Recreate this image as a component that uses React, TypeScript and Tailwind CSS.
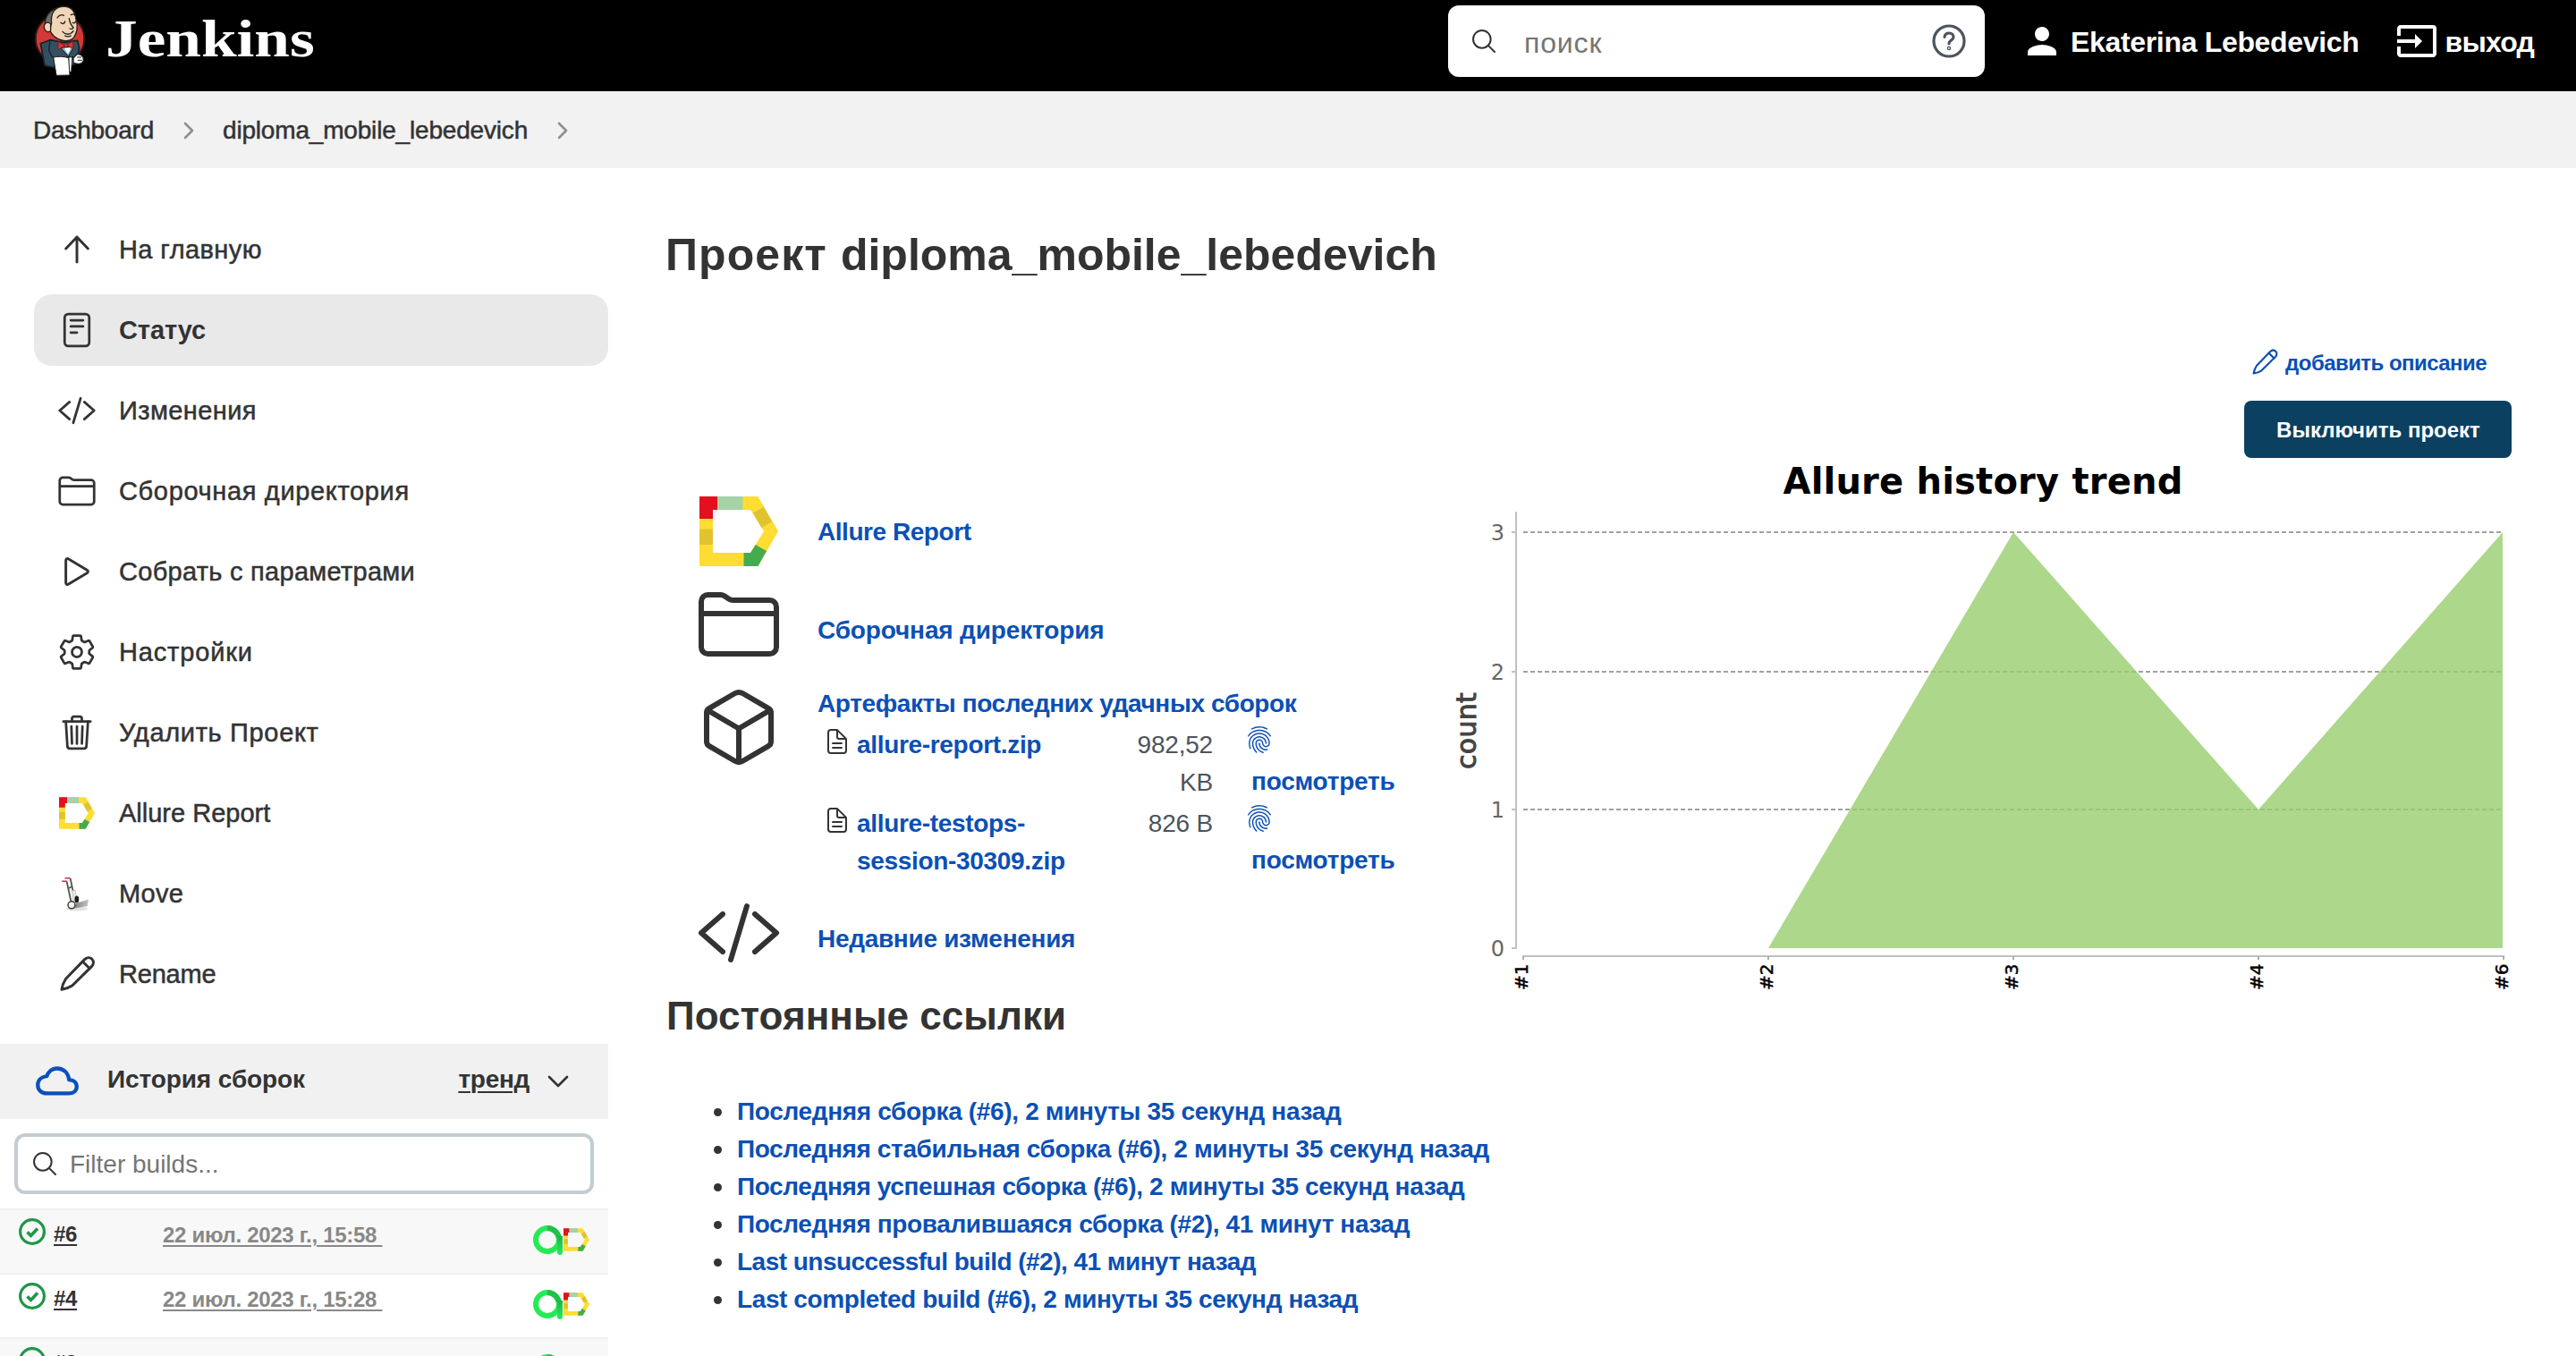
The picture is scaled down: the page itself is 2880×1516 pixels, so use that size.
import type { ReactNode } from "react";
import {
  IoCodeSlashOutline,
  IoCubeOutline,
  IoDocumentTextOutline,
  IoFingerPrintOutline,
  IoFolderOutline,
  IoReaderOutline,
  IoSearchOutline,
  IoSettingsOutline,
  IoTrashOutline,
} from "react-icons/io5";
import { MdInput } from "react-icons/md";

function Butler() {
  return (
    <svg width="64" height="84" viewBox="0 0 64 84" className="shrink-0">
      <g transform="translate(-16 -4) scale(0.33333)" strokeLinejoin="round" strokeLinecap="round">
        <circle cx="141" cy="130" r="82" fill="#d33833" stroke="#2b1b1b" strokeWidth="6" />
        <path d="M76 146 L108 134 L150 142 L200 136 L206 160 L196 212 L178 222 L120 226 L90 220 Z" fill="#335061" stroke="#14202a" strokeWidth="5" />
        <path d="M108 134 L104 170 L116 192 L190 192" fill="none" stroke="#14202a" strokeWidth="4" />
        <path d="M144 160 L188 156 L170 188 Z" fill="#81b0c4" stroke="#14202a" strokeWidth="3" />
        <path d="M156 162 L178 160 L168 182 Z" fill="#ffffff" />
        <path d="M92 100 C86 60 100 30 150 22 L134 80 L112 100 Z" fill="#6d6b6d" stroke="#231f20" strokeWidth="4" />
        <path d="M113 78 C108 40 128 22 154 21 C184 22 194 46 195 66 C202 84 200 112 184 130 C166 142 140 138 122 122 C112 114 108 104 106 100 Z" fill="#f0d6b7" stroke="#231f20" strokeWidth="4" />
        <path d="M110 80 C94 68 84 84 90 98 C94 108 106 110 110 102 Z" fill="#f0d6b7" stroke="#231f20" strokeWidth="4" />
        <path d="M132 60 C138 50 148 48 154 52 M178 50 C184 46 190 48 192 52 M144 76 C150 82 156 80 158 72 M184 76 C188 80 192 76 194 72 M172 62 C174 78 182 88 186 92 C184 98 178 98 174 96 M150 106 C160 118 176 118 186 104 M158 120 C166 124 174 122 178 120" fill="none" stroke="#231f20" strokeWidth="4" />
        <path d="M158 152 L136 140 L134 166 Z M164 152 L184 138 L186 162 Z" fill="#d33833" stroke="#8a1a1a" strokeWidth="3" />
        <circle cx="161" cy="152" r="6" fill="#d33833" stroke="#8a1a1a" strokeWidth="3" />
        <path d="M172 194 L180 192 L178 240 L172 240 Z" fill="#ffffff" />
        <path d="M120 192 C136 188 156 190 170 194 L174 252 L130 253 Z" fill="#ffffff" stroke="#231f20" strokeWidth="3" />
        <path d="M186 194 L198 182 C212 180 222 190 220 204 C214 218 198 216 186 210 Z" fill="#ffffff" stroke="#231f20" strokeWidth="4" />
        <path d="M200 192 L212 192 M202 202 L214 202" stroke="#231f20" strokeWidth="3" />
      </g>
    </svg>
  );
}

function AllureMark({ className }: { className: string }) {
  return (
    <svg viewBox="0 0 88 78" className={className}>
      <path d="M0 0H65.5L88 39L65.5 78H0ZM15 15V63H57L72 39L57 15Z" fill="#ffdd33" fillRule="evenodd" />
      <path d="M0 0H20V15H15V25H0Z" fill="#e3101f" />
      <path d="M20 0H48.5V15H20Z" fill="#a7d1a6" />
      <path d="M0 36.5H15V54H0Z" fill="#dfc430" />
      <path d="M60 18.3L71.7 11.7L81.3 28.3L69.3 35Z" fill="#dfc430" />
      <path d="M49.5 63H57L62.8 54L75 61L65.5 78H49.5Z" fill="#45ab4f" />
    </svg>
  );
}

function TestOpsMark() {
  return (
    <svg viewBox="0 0 34 33" className="h-[33px] w-[34px]">
      <defs>
        <linearGradient id="stem" x1="0" y1="0" x2="0" y2="1">
          <stop offset="0" stopColor="#22b14a" />
          <stop offset="1" stopColor="#26ee57" />
        </linearGradient>
      </defs>
      <circle cx="16" cy="16" r="13" fill="none" stroke="#26ea55" strokeWidth="6" />
      <path d="M16 3A13 13 0 0 1 28.6 13" fill="none" stroke="#22c04b" strokeWidth="6" />
      <path d="M27 12h6v18a3 3 0 0 1-6 0z" fill="url(#stem)" />
    </svg>
  );
}

function Pencil({ className }: { className: string }) {
  return (
    <svg viewBox="0 0 44 44" className={className} fill="none" stroke="currentColor" strokeWidth="3" strokeLinejoin="round" strokeLinecap="round">
      <path d="M5 39.2C5.6 35 7.4 30.6 9.6 27.2L30.6 5.6C33 3.2 36.4 3 38.8 5.2C41 7.4 41 11 38.6 13.4L17 34.8C13.8 37 9.4 38.6 5 39.2Z" />
      <path d="M28.4 8L36.2 15.8" />
    </svg>
  );
}

function ArrowUp() {
  return (
    <svg viewBox="0 0 512 512" className="size-11" fill="none" stroke="currentColor" strokeWidth="34" strokeLinecap="round" strokeLinejoin="round">
      <path d="M112 244L256 92L400 244M256 100V420" />
    </svg>
  );
}

function Play() {
  return (
    <svg viewBox="0 0 512 512" className="size-11" fill="none" stroke="currentColor" strokeWidth="34">
      <path d="M112 111v290c0 17.44 17 28.52 31 20.16l247.9-148.37c12.12-7.25 12.12-26.33 0-33.58L143 90.84c-14-8.36-31 2.72-31 20.16z" />
    </svg>
  );
}

function HandTruck() {
  return (
    <svg viewBox="0 0 44 44" className="size-11">
      <defs>
        <linearGradient id="plate" x1="0" y1="0" x2="1" y2="0">
          <stop offset="0" stopColor="#7d807c" />
          <stop offset="1" stopColor="#c4c6c2" />
        </linearGradient>
      </defs>
      <ellipse cx="22" cy="39" rx="12" ry="2.5" fill="#e2e2e2" />
      <path d="M14.6 5L19 26M10.6 8.5L15.5 31" stroke="#555753" strokeWidth="1.8" fill="none" />
      <path d="M12.5 16L17 14" stroke="#555753" strokeWidth="1.4" />
      <path d="M16.5 19L20 18L22 31L18 32Z" fill="#e6e8e4" stroke="#babdb6" strokeWidth="0.8" />
      <path d="M8.5 4.7H14.5M5.2 8.2H11" stroke="#b23a3a" strokeWidth="1.5" />
      <ellipse cx="21.8" cy="28.6" rx="2.4" ry="4" fill="#1d1d1d" />
      <path d="M21 33L35 28.6L33.8 36L19 38.4Z" fill="url(#plate)" />
      <circle cx="16" cy="34.8" r="4" fill="#f3f3f2" stroke="#3c3e3b" strokeWidth="1.5" />
    </svg>
  );
}

function Cloud() {
  return (
    <svg viewBox="0 0 512 512" className="-mt-0.5 size-12 text-[#0b50bb]" fill="none" stroke="currentColor" strokeWidth="46" strokeLinejoin="round">
      <path d="M396 246c-8.9-86-70-134-140-134-66 0-110 46-124 92-58 6-108 42-108 106 0 64 50 100 112 100h256c52 0 96-26 96-82 0-56-50-79-92-82z" />
    </svg>
  );
}

function Chevron({ className }: { className: string }) {
  return (
    <svg viewBox="0 0 12 20" className={className} fill="none" stroke="currentColor" strokeWidth="2.6" strokeLinecap="round" strokeLinejoin="round">
      <path d="M2 2L10 10L2 18" />
    </svg>
  );
}

function Header() {
  return (
    <header className="flex h-[102px] items-start bg-black text-white">
      <div className="flex flex-1 items-start pl-9">
        <div className="pt-1">
          <Butler />
        </div>
        <span className="ml-[18px] origin-left scale-x-[1.188] pt-px font-['Liberation_Serif',serif] text-[60px] leading-[85px] font-bold">
          Jenkins
        </span>
      </div>
      <div className="mt-1.5 flex h-20 items-center pr-[47px]">
        <div className="flex h-20 w-[600px] items-center rounded-xl bg-white pr-5 pl-6">
          <IoSearchOutline className="size-8 text-[#333333]" />
          <span className="ml-[29px] flex-1 pt-[3px] text-[32px] tracking-[0.9px] text-[#757575]">поиск</span>
          <svg viewBox="0 0 40 40" className="size-10 text-[#4d545d]" fill="none" stroke="currentColor" strokeWidth="3.2" strokeLinecap="round">
            <circle cx="20" cy="20" r="17" />
            <path d="M15 15.4C15.4 12.4 17.4 11 20 11C23 11 25 12.8 25 15.4C25 19 20 18.8 20 22.8" />
            <circle cx="20" cy="28" r="0.7" />
          </svg>
        </div>
        <svg viewBox="4 4 16 16" className="ml-12 size-8" fill="currentColor">
          <path d="M12 12c2.21 0 4-1.79 4-4s-1.79-4-4-4-4 1.79-4 4 1.79 4 4 4zm0 2c-2.67 0-8 1.34-8 4v2h16v-2c0-2.66-5.33-4-8-4z" />
        </svg>
        <span className="ml-4 pt-[2px] text-[32px] font-bold tracking-[-0.32px]">Ekaterina Lebedevich</span>
        <MdInput className="ml-10 size-12" />
        <span className="ml-2 pt-[2px] text-[32px] font-bold tracking-[-0.8px]">выход</span>
      </div>
    </header>
  );
}

function Breadcrumbs() {
  return (
    <nav className="flex h-[86px] items-center bg-[#f2f2f2] pt-px pl-[37px] text-[28px] [-webkit-text-stroke:0.5px_currentColor]">
      <span className="tracking-[-0.22px]">Dashboard</span>
      <Chevron className="ml-[33px] h-5 w-3 text-[#8f8f8f]" />
      <span className="ml-8 tracking-[-0.18px]">diploma_mobile_lebedevich</span>
      <Chevron className="ml-[33px] h-5 w-3 text-[#8f8f8f]" />
    </nav>
  );
}

const tasks: { icon: ReactNode; label: string; style: string; active?: boolean }[] = [
  { icon: <ArrowUp />, label: "На главную", style: "tracking-[0.4px]" },
  { icon: <IoReaderOutline className="size-11 stroke-[#333333] stroke-8" />, label: "Статус", style: "tracking-[-0.1px]", active: true },
  { icon: <IoCodeSlashOutline className="size-11" />, label: "Изменения", style: "tracking-[0.4px]" },
  { icon: <IoFolderOutline className="size-11" />, label: "Сборочная директория", style: "tracking-[0.65px]" },
  { icon: <Play />, label: "Собрать с параметрами", style: "tracking-[0.28px]" },
  { icon: <IoSettingsOutline className="size-11" />, label: "Настройки", style: "tracking-[0.85px]" },
  { icon: <IoTrashOutline className="size-11" />, label: "Удалить Проект", style: "tracking-[0.66px]" },
  { icon: <AllureMark className="mx-0.5 h-9 w-10" />, label: "Allure Report", style: "" },
  { icon: <HandTruck />, label: "Move", style: "tracking-[0.3px]" },
  { icon: <Pencil className="size-11" />, label: "Rename", style: "tracking-[-0.2px]" },
];

const builds = [
  { id: "#6", date: "22 июл. 2023 г., 15:58", shade: "bg-[#f8f8f8]" },
  { id: "#4", date: "22 июл. 2023 г., 15:28", shade: "bg-white" },
  { id: "#3", date: "22 июл. 2023 г., 15:25", shade: "bg-[#f8f8f8]" },
];

function Sidebar() {
  return (
    <aside className="flex w-[680px] shrink-0 flex-col pt-[51px]">
      <ul className="flex flex-col gap-2.5 pl-[38px]">
        {tasks.map((t) => (
          <li
            key={t.label}
            className={
              "flex h-20 items-center rounded-[20px] pl-[26px] text-[29px] " +
              (t.active ? "bg-[#e9e9e9] font-bold" : "[-webkit-text-stroke:0.5px_currentColor]")
            }
          >
            {t.icon}
            <span className={"ml-[25px] pt-0.5 " + t.style}>{t.label}</span>
          </li>
        ))}
      </ul>
      <div className="mt-[38px] flex h-[84px] items-center bg-[#f1f1f1] pl-10 text-[28px] font-bold">
        <Cloud />
        <span className="-mt-1 ml-8 flex-1 tracking-[-0.1px]">История сборок</span>
        <span className="-mt-1 tracking-[-0.3px] underline decoration-2 underline-offset-4">тренд</span>
        <svg viewBox="0 0 24 14" className="mr-[44px] ml-5 h-3.5 w-6" fill="none" stroke="currentColor" strokeWidth="2.6" strokeLinecap="round" strokeLinejoin="round">
          <path d="M2 2L12 12L22 2" />
        </svg>
      </div>
      <div className="m-4 flex h-[68px] items-center rounded-xl border-4 border-[#c3ccd1] bg-white pl-3.5 text-[28px] text-[#757575]">
        <IoSearchOutline className="size-8 text-[#333333]" />
        <span className="ml-3 pt-px">Filter builds...</span>
      </div>
      {builds.map((b) => (
        <div key={b.id} className={"flex h-[72px] shrink-0 items-start border-t-2 border-[#f0f0f0] pl-[21px] text-2xl leading-8 font-bold " + b.shade}>
          <svg viewBox="0 0 30 30" className="mt-[9px] size-[30px]" fill="none" stroke="#1f9649" strokeWidth="3.2">
            <circle cx="15" cy="15" r="13.4" />
            <path d="M9.5 15.5L13.5 19.4L21 11.6" strokeWidth="3.6" />
          </svg>
          <span className="mt-[11px] ml-[9px] w-[122px] tracking-[-0.3px]">
            <span className="underline decoration-2 underline-offset-[3px]">{b.id}</span>
          </span>
          <span className="mt-3 flex-1 tracking-[-0.3px] text-[#888888]">
            <span className="underline decoration-2 underline-offset-[3px]">{b.date}&nbsp;</span>
          </span>
          <div className="mt-[17px] mr-[21px] flex items-start">
            <TestOpsMark />
            <AllureMark className="mt-[3px] h-[26px] w-[29px]" />
          </div>
        </div>
      ))}
    </aside>
  );
}

const files = [
  { name: ["allure-report.zip"], size: ["982,52", "KB"] },
  { name: ["allure-testops-", "session-30309.zip"], size: ["826 B"] },
];

const permalinks = [
  { text: "Последняя сборка (#6), 2 минуты 35 секунд назад", style: "tracking-[-0.34px]" },
  { text: "Последняя стабильная сборка (#6), 2 минуты 35 секунд назад", style: "tracking-[-0.37px]" },
  { text: "Последняя успешная сборка (#6), 2 минуты 35 секунд назад", style: "tracking-[-0.37px]" },
  { text: "Последняя провалившаяся сборка (#2), 41 минут назад", style: "tracking-[-0.38px]" },
  { text: "Last unsuccessful build (#2), 41 минут назад", style: "tracking-[-0.52px]" },
  { text: "Last completed build (#6), 2 минуты 35 секунд назад", style: "tracking-[-0.4px]" },
];

function Summary() {
  return (
    <div className="w-[876px] shrink-0 text-[28px] leading-[42px] font-bold text-[#0b50b5]">
      <div className="flex flex-col pl-[34px]">
        <div className="mt-[38px] flex h-[88px] items-center">
          <AllureMark className="mx-1 h-[78px] w-[88px]" />
          <span className="ml-10 pt-0.5 tracking-[-0.45px]">Allure Report</span>
        </div>
        <div className="mt-3 flex h-24 items-center">
          <IoFolderOutline className="size-24 text-[#333333]" />
          <span className="ml-10 pt-3.5 tracking-[-0.15px]">Сборочная директория</span>
        </div>
        <div className="mt-[19px] flex items-start">
          <IoCubeOutline className="size-24 shrink-0 text-[#333333]" />
          <div className="ml-10 pt-px">
            <div className="tracking-[-0.4px]">Артефакты последних удачных сборок</div>
            {files.map((f) => (
              <div key={f.name[0]} className="mt-1 flex items-start pl-1.5">
                <IoDocumentTextOutline className="mt-px size-8 shrink-0 text-[#333333]" />
                <div className="ml-1.5 w-[278px] tracking-[-0.32px]">
                  {f.name.map((n) => (
                    <div key={n}>{n}</div>
                  ))}
                </div>
                <div className="w-[120px] text-right font-normal tracking-[-0.2px] text-[#4d545d]">
                  {f.size.map((s) => (
                    <div key={s}>{s}</div>
                  ))}
                </div>
                <div className="ml-9">
                  <div className="h-[42px]">
                    <IoFingerPrintOutline className="-mt-px size-8" />
                  </div>
                  <div className="ml-[7px] tracking-[-0.25px]">посмотреть</div>
                </div>
              </div>
            ))}
          </div>
        </div>
        <div className="mt-[11px] flex h-24 items-center">
          <IoCodeSlashOutline className="size-24 text-[#333333]" />
          <span className="ml-10 pt-3.5 tracking-[-0.3px]">Недавние изменения</span>
        </div>
      </div>
      <h2 className="mt-[15px] ml-px text-[44px] leading-[60px] tracking-[0.05px] text-[#333333]">Постоянные ссылки</h2>
      <ul className="mt-14 pl-[54px] whitespace-nowrap">
        {permalinks.map((p) => (
          <li key={p.text} className="flex items-center">
            <span className="mr-[17px] size-[9px] shrink-0 rounded-full bg-[#333333]" />
            <span className={p.style}>{p.text}</span>
          </li>
        ))}
      </ul>
    </div>
  );
}

const points = [
  { label: "#1", x: 83 },
  { label: "#2", x: 357 },
  { label: "#3", x: 631 },
  { label: "#4", x: 905 },
  { label: "#6", x: 1179 },
];

const gridLines = [
  { value: 3, y: 83 },
  { value: 2, y: 239 },
  { value: 1, y: 393 },
  { value: 0, y: 548 },
];

function TrendChart() {
  return (
    <svg width="1200" height="600" viewBox="0 0 1200 600" className="shrink-0 font-['DejaVu_Sans',sans-serif]">
      <text x="597" y="40" textAnchor="middle" fontSize="40" fontWeight="700" letterSpacing="0.2" fill="#000000">
        Allure history trend
      </text>
      <text transform="translate(30 305) rotate(-90)" textAnchor="middle" fontSize="30" letterSpacing="0.3" fill="#444444" stroke="#444444" strokeWidth="1">
        count
      </text>
      <path d="M75 60V549" stroke="#c0c0c0" strokeWidth="2" />
      <path d="M82 557H1180" stroke="#c0c0c0" strokeWidth="2" />
      {gridLines.map((g) => (
        <g key={g.value}>
          <path d={`M70 ${g.y}H75`} stroke="#c0c0c0" strokeWidth="2" />
          {g.value > 0 && <path d={`M83 ${g.y}H1178`} stroke="#a0a0a0" strokeWidth="2" strokeDasharray="5 3" />}
          <text x="62" y={g.y + 9} textAnchor="end" fontSize="24" fill="#666666">
            {g.value}
          </text>
        </g>
      ))}
      <path d="M357 548L631 83L905 393L1178 83V548Z" fill="#99cd6d" fillOpacity="0.8" />
      {points.map((p) => (
        <g key={p.label}>
          <path d={`M${p.x} 557V561`} stroke="#b0b0b0" strokeWidth="2" />
          <text transform={`translate(${p.x + 5} 595) rotate(-90)`} fontSize="20" fill="#000000" stroke="#000000" strokeWidth="0.5">
            {p.label}
          </text>
        </g>
      ))}
    </svg>
  );
}

function Main() {
  return (
    <main className="flex-1 pt-[67px] pl-16">
      <h1 className="text-[50px] leading-[60px] font-bold">
        <span className="tracking-[1.1px]">Проект </span>
        diploma_mobile_lebedevich
      </h1>
      <div className="mt-[68px] flex flex-col items-end pr-[72px] text-2xl font-bold">
        <div className="flex h-11 items-center pr-[28px] text-[#0b50b5]">
          <Pencil className="size-8" />
          <span className="ml-[7px] pt-px tracking-[-0.55px]">добавить описание</span>
        </div>
        <button className="mt-[21px] h-16 w-[299px] rounded-lg bg-[#0b4060] pt-px pl-px text-white">Выключить проект</button>
      </div>
      <div className="flex items-start">
        <Summary />
        <TrendChart />
      </div>
    </main>
  );
}

export default function App() {
  return (
    <div className="h-[1516px] w-[2880px] overflow-hidden bg-white font-['Liberation_Sans',Arial,sans-serif] text-[#333333]">
      <Header />
      <Breadcrumbs />
      <div className="flex items-start">
        <Sidebar />
        <Main />
      </div>
    </div>
  );
}
